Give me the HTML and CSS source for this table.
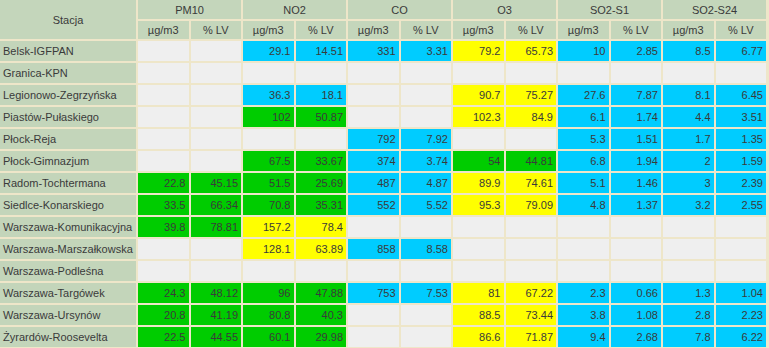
FILE: index.html
```html
<!DOCTYPE html>
<html lang="pl">
<head>
<meta charset="utf-8">
<title>Stacja</title>
<link rel="stylesheet" href="styles.css">
</head>
<body>
<table class="grid">
<colgroup>
<col class="c-st">
<col span="12" class="c-v">
</colgroup>
<thead>
<tr class="h1">
<th rowspan="2" class="st-h">Stacja</th>
<th colspan="2">PM10</th>
<th colspan="2">NO2</th>
<th colspan="2">CO</th>
<th colspan="2">O3</th>
<th colspan="2">SO2-S1</th>
<th colspan="2">SO2-S24</th>
</tr>
<tr class="h2">
<th>µg/m3</th><th>% LV</th>
<th>µg/m3</th><th>% LV</th>
<th>µg/m3</th><th>% LV</th>
<th>µg/m3</th><th>% LV</th>
<th>µg/m3</th><th>% LV</th>
<th>µg/m3</th><th>% LV</th>
</tr>
</thead>
<tbody>
<tr><td class="st">Belsk-IGFPAN</td>
<td class="e"></td><td class="e"></td>
<td class="b">29.1</td><td class="b">14.51</td>
<td class="b">331</td><td class="b">3.31</td>
<td class="y">79.2</td><td class="y">65.73</td>
<td class="b">10</td><td class="b">2.85</td>
<td class="b">8.5</td><td class="b">6.77</td></tr>
<tr><td class="st">Granica-KPN</td>
<td class="e"></td><td class="e"></td>
<td class="e"></td><td class="e"></td>
<td class="e"></td><td class="e"></td>
<td class="e"></td><td class="e"></td>
<td class="e"></td><td class="e"></td>
<td class="e"></td><td class="e"></td></tr>
<tr><td class="st">Legionowo-Zegrzyńska</td>
<td class="e"></td><td class="e"></td>
<td class="b">36.3</td><td class="b">18.1</td>
<td class="e"></td><td class="e"></td>
<td class="y">90.7</td><td class="y">75.27</td>
<td class="b">27.6</td><td class="b">7.87</td>
<td class="b">8.1</td><td class="b">6.45</td></tr>
<tr><td class="st">Piastów-Pułaskiego</td>
<td class="e"></td><td class="e"></td>
<td class="g">102</td><td class="g">50.87</td>
<td class="e"></td><td class="e"></td>
<td class="y">102.3</td><td class="y">84.9</td>
<td class="b">6.1</td><td class="b">1.74</td>
<td class="b">4.4</td><td class="b">3.51</td></tr>
<tr><td class="st">Płock-Reja</td>
<td class="e"></td><td class="e"></td>
<td class="e"></td><td class="e"></td>
<td class="b">792</td><td class="b">7.92</td>
<td class="e"></td><td class="e"></td>
<td class="b">5.3</td><td class="b">1.51</td>
<td class="b">1.7</td><td class="b">1.35</td></tr>
<tr><td class="st">Płock-Gimnazjum</td>
<td class="e"></td><td class="e"></td>
<td class="g">67.5</td><td class="g">33.67</td>
<td class="b">374</td><td class="b">3.74</td>
<td class="g">54</td><td class="g">44.81</td>
<td class="b">6.8</td><td class="b">1.94</td>
<td class="b">2</td><td class="b">1.59</td></tr>
<tr><td class="st">Radom-Tochtermana</td>
<td class="g">22.8</td><td class="g">45.15</td>
<td class="g">51.5</td><td class="g">25.69</td>
<td class="b">487</td><td class="b">4.87</td>
<td class="y">89.9</td><td class="y">74.61</td>
<td class="b">5.1</td><td class="b">1.46</td>
<td class="b">3</td><td class="b">2.39</td></tr>
<tr><td class="st">Siedlce-Konarskiego</td>
<td class="g">33.5</td><td class="g">66.34</td>
<td class="g">70.8</td><td class="g">35.31</td>
<td class="b">552</td><td class="b">5.52</td>
<td class="y">95.3</td><td class="y">79.09</td>
<td class="b">4.8</td><td class="b">1.37</td>
<td class="b">3.2</td><td class="b">2.55</td></tr>
<tr><td class="st">Warszawa-Komunikacyjna</td>
<td class="g">39.8</td><td class="g">78.81</td>
<td class="y">157.2</td><td class="y">78.4</td>
<td class="e"></td><td class="e"></td>
<td class="e"></td><td class="e"></td>
<td class="e"></td><td class="e"></td>
<td class="e"></td><td class="e"></td></tr>
<tr><td class="st">Warszawa-Marszałkowska</td>
<td class="e"></td><td class="e"></td>
<td class="y">128.1</td><td class="y">63.89</td>
<td class="b">858</td><td class="b">8.58</td>
<td class="e"></td><td class="e"></td>
<td class="e"></td><td class="e"></td>
<td class="e"></td><td class="e"></td></tr>
<tr><td class="st">Warszawa-Podleśna</td>
<td class="e"></td><td class="e"></td>
<td class="e"></td><td class="e"></td>
<td class="e"></td><td class="e"></td>
<td class="e"></td><td class="e"></td>
<td class="e"></td><td class="e"></td>
<td class="e"></td><td class="e"></td></tr>
<tr><td class="st">Warszawa-Targówek</td>
<td class="g">24.3</td><td class="g">48.12</td>
<td class="g">96</td><td class="g">47.88</td>
<td class="b">753</td><td class="b">7.53</td>
<td class="y">81</td><td class="y">67.22</td>
<td class="b">2.3</td><td class="b">0.66</td>
<td class="b">1.3</td><td class="b">1.04</td></tr>
<tr><td class="st">Warszawa-Ursynów</td>
<td class="g">20.8</td><td class="g">41.19</td>
<td class="g">80.8</td><td class="g">40.3</td>
<td class="e"></td><td class="e"></td>
<td class="y">88.5</td><td class="y">73.44</td>
<td class="b">3.8</td><td class="b">1.08</td>
<td class="b">2.8</td><td class="b">2.23</td></tr>
<tr><td class="st">Żyrardów-Roosevelta</td>
<td class="g">22.5</td><td class="g">44.55</td>
<td class="g">60.1</td><td class="g">29.98</td>
<td class="e"></td><td class="e"></td>
<td class="y">86.6</td><td class="y">71.87</td>
<td class="b">9.4</td><td class="b">2.68</td>
<td class="b">7.8</td><td class="b">6.22</td></tr>
</tbody>
</table>
</body>
</html>
```
FILE: styles.css
```css
html, body {
  margin: 0;
  padding: 0;
  background: #eee6c9;
  overflow: hidden;
}

.grid {
  table-layout: fixed;
  width: 770px;
  margin: -2px 0 0 -2px;
  border-collapse: separate;
  border-spacing: 2px;
  background: #eee6c9;
  font-family: "Liberation Sans", Arial, sans-serif;
  font-size: 11px;
  letter-spacing: 0;
  color: #3a3a3a;
}

.c-st { width: 136px; }

.grid th,
.grid td {
  padding: 0 3px;
  overflow: hidden;
  white-space: nowrap;
  line-height: 14px;
}

.grid th {
  font-weight: normal;
  background: #c4d6bb;
  text-align: center;
}

.h1 th { height: 19px; }
.h2 th { height: 18px; }

.grid td {
  height: 20px;
  text-align: right;
}

.grid td.st {
  text-align: left;
  background: #c3d5ba;
  padding-left: 3px;
}

.e { background: #efefef; }
.b { background: #00ccff; }
.g { background: #00cc00; }
.y { background: #ffff00; }
```
